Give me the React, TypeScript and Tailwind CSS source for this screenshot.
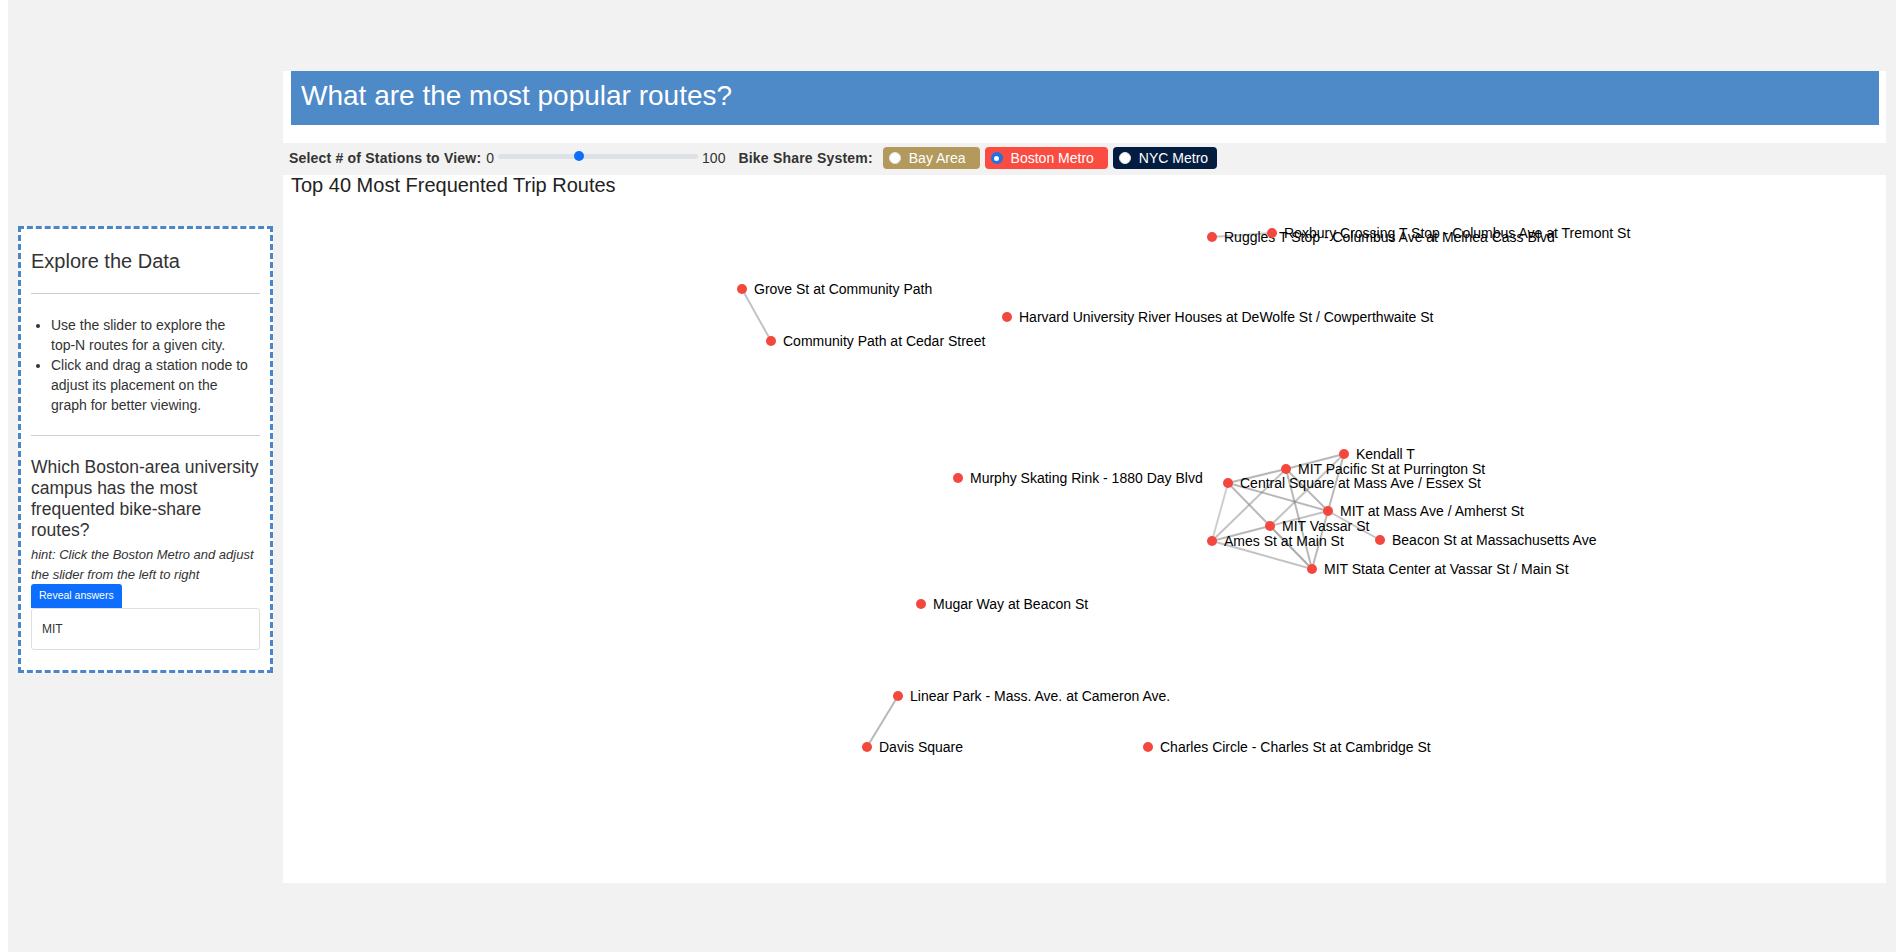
import React from "react";

type StationNode = { id: string; name: string; x: number; y: number };

// graph coordinates are relative to the svg (page x - 283, page y - 195)
const OX = 283;
const OY = 195;

const stations: StationNode[] = [
  { id: "ruggles", name: "Ruggles T Stop - Columbus Ave at Melnea Cass Blvd", x: 1212, y: 237 },
  { id: "roxbury", name: "Roxbury Crossing T Stop - Columbus Ave at Tremont St", x: 1272, y: 233 },
  { id: "grove", name: "Grove St at Community Path", x: 742, y: 289 },
  { id: "cedar", name: "Community Path at Cedar Street", x: 771, y: 341 },
  { id: "harvard", name: "Harvard University River Houses at DeWolfe St / Cowperthwaite St", x: 1007, y: 317 },
  { id: "murphy", name: "Murphy Skating Rink - 1880 Day Blvd", x: 958, y: 478 },
  { id: "kendall", name: "Kendall T", x: 1344, y: 454 },
  { id: "pacific", name: "MIT Pacific St at Purrington St", x: 1286, y: 469 },
  { id: "central", name: "Central Square at Mass Ave / Essex St", x: 1228, y: 483 },
  { id: "massave", name: "MIT at Mass Ave / Amherst St", x: 1328, y: 511 },
  { id: "vassar", name: "MIT Vassar St", x: 1270, y: 526 },
  { id: "ames", name: "Ames St at Main St", x: 1212, y: 541 },
  { id: "beacon", name: "Beacon St at Massachusetts Ave", x: 1380, y: 540 },
  { id: "stata", name: "MIT Stata Center at Vassar St / Main St", x: 1312, y: 569 },
  { id: "mugar", name: "Mugar Way at Beacon St", x: 921, y: 604 },
  { id: "linear", name: "Linear Park - Mass. Ave. at Cameron Ave.", x: 898, y: 696 },
  { id: "davis", name: "Davis Square", x: 867, y: 747 },
  { id: "charles", name: "Charles Circle - Charles St at Cambridge St", x: 1148, y: 747 },
];

// [source, target, opacity]
const routes: [string, string, number][] = [
  ["ruggles", "roxbury", 0.5],
  ["grove", "cedar", 0.5],
  ["linear", "davis", 0.6],
  ["kendall", "pacific", 0.6],
  ["kendall", "massave", 0.6],
  ["massave", "stata", 0.6],
  ["central", "pacific", 0.6],
  ["central", "ames", 0.4],
  ["central", "massave", 0.6],
  ["central", "vassar", 0.6],
  ["vassar", "stata", 0.7],
  ["pacific", "ames", 0.5],
  ["pacific", "stata", 0.6],
  ["pacific", "massave", 0.6],
  ["vassar", "ames", 0.6],
  ["vassar", "massave", 0.5],
  ["ames", "stata", 0.5],
  ["kendall", "vassar", 0.5],
  ["massave", "beacon", 0.5],
];

const byId = (id: string) => stations.find((s) => s.id === id)!;

const SystemButton = (props: { label: string; className: string; checked?: boolean }) => (
  <label className={props.className}>
    {props.checked ? (
      <span className="flex h-[12px] w-[12px] items-center justify-center rounded-full bg-[#1a73e8]">
        <span className="h-[5px] w-[5px] rounded-full bg-white" />
      </span>
    ) : (
      <span className="h-[12px] w-[12px] rounded-full border border-[#e5e5e5] bg-white" />
    )}
    <span className="ml-[8px]">{props.label}</span>
  </label>
);

export default function App() {
  return (
    <div className="ml-2 mr-[6px] flex min-h-[952px] bg-[#f2f2f2] font-['Liberation_Sans',Arial,sans-serif] text-[#333]">
      {/* Sidebar */}
      <aside className="w-[275px] shrink-0 pl-[10px] pt-[226px]">
        <div className="w-[255px] border-[3px] border-dashed border-[#4a86c8] bg-white px-[10px] pb-[20px] pt-[21px]">
          <h3 className="text-[20px] leading-[22px]">Explore the Data</h3>
          <hr className="mt-[21px] border-[#cfcfcf]" />
          <ul className="mt-[21px] list-disc pl-[20px] pr-[7px] text-[14px] leading-[20px]">
            <li>Use the slider to explore the top-N routes for a given city.</li>
            <li>Click and drag a station node to adjust its placement on the graph for better viewing.</li>
          </ul>
          <hr className="mt-[20px] border-[#cfcfcf]" />
          <p className="mt-[21px] text-[17.5px] leading-[21px]">
            Which Boston-area university campus has the most frequented bike-share routes?
          </p>
          <p className="mt-[4px] text-[13px] italic leading-[19.5px]">
            hint: Click the Boston Metro and adjust the slider from the left to right
          </p>
          <button className="flex h-[24px] items-center rounded-t-[3px] bg-[#0d6efd] px-[8px] text-[10.5px] text-white">
            Reveal answers
          </button>
          <div className="flex h-[42px] items-center rounded-[3px] border border-[#dfdfdf] px-[10px] text-[12px]">
            MIT
          </div>
        </div>
      </aside>

      {/* Main */}
      <main className="mr-[10px] flex-1 pt-[71px]">
        <div className="bg-white pb-[18px] pl-[8px] pr-[7px]">
          <div className="h-[54px] bg-[#4e89c8] pl-[10px] pt-[10px]">
            <h2 className="text-[28px] leading-[30px] text-white">What are the most popular routes?</h2>
          </div>
        </div>

        <div className="flex h-[32px] items-center pb-[2px] pl-[6px] text-[14px] text-[#333]">
          <span className="font-bold tracking-[0.2px]">Select # of Stations to View:</span>
          <span className="ml-[5px]">0</span>
          <div className="relative mb-[4px] ml-[4px] h-[5px] w-[200px] rounded-full bg-[#dee2e6]">
            <span className="absolute left-[76px] top-[-3px] h-[10px] w-[10px] rounded-full bg-[#0d6efd]" />
          </div>
          <span className="ml-[4px]">100</span>
          <span className="ml-[13px] font-bold tracking-[0.2px]">Bike Share System:</span>
          <div className="ml-[10px] flex gap-[5px] text-white">
            <SystemButton
              label="Bay Area"
              className="flex h-[22px] items-center rounded-[4px] bg-[#b39a5c] pl-[6px] pr-[14px]"
            />
            <SystemButton
              label="Boston Metro"
              checked
              className="flex h-[22px] items-center rounded-[4px] bg-[#fb4c42] pl-[6px] pr-[14px]"
            />
            <SystemButton
              label="NYC Metro"
              className="flex h-[22px] items-center rounded-[4px] bg-[#031d41] pl-[6px] pr-[9px]"
            />
          </div>
        </div>

        <div className="h-[708px] bg-white">
          <div className="h-[20px] pl-[8px] text-[20px] leading-[20px] text-[#222]">Top 40 Most Frequented Trip Routes</div>
          <svg width="100%" height="688">
            {routes.map(([a, b, op], i) => {
              const s = byId(a);
              const t = byId(b);
              return (
                <line
                  key={i}
                  x1={s.x - OX}
                  y1={s.y - OY}
                  x2={t.x - OX}
                  y2={t.y - OY}
                  stroke="#888"
                  strokeOpacity={op}
                  strokeWidth={2}
                />
              );
            })}
            {stations.map((s) => (
              <g key={s.id} transform={`translate(${s.x - OX},${s.y - OY})`}>
                <circle r={5} fill="#f4473d" />
                <text x={12} y={4.5} fontSize={14} fill="#000">
                  {s.name}
                </text>
              </g>
            ))}
          </svg>
        </div>
      </main>
    </div>
  );
}
